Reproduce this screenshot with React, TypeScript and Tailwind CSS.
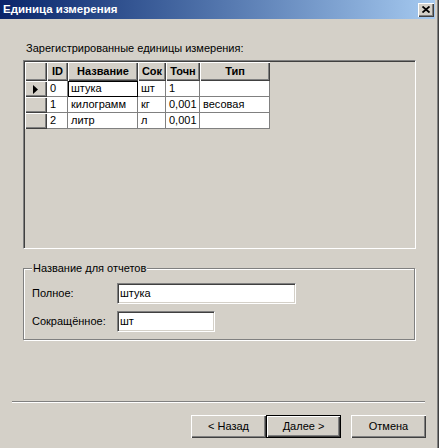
const units = [
  { id: '0', name: 'штука', short: 'шт', prec: '1', type: '' },
  { id: '1', name: 'килограмм', short: 'кг', prec: '0,001', type: 'весовая' },
  { id: '2', name: 'литр', short: 'л', prec: '0,001', type: '' },
];

const raised =
  'bg-[#d4d0c8] shadow-[inset_1px_1px_0_#fff,inset_-1px_-1px_0_#404040,inset_-2px_-2px_0_#808080]';
const sunken =
  'border border-t-[#808080] border-l-[#808080] border-r-white border-b-white p-[1px] shadow-[inset_1px_1px_0_#404040,inset_-1px_-1px_0_#d4d0c8]';

function HeaderCell({ w, children }: { w: string; children?: React.ReactNode }) {
  return (
    <div className={`${w} h-[19px] ${raised} flex items-center justify-center font-bold pb-[1px]`}>
      {children}
    </div>
  );
}

function Cell({ w, focus, children }: { w: string; focus?: boolean; children?: React.ReactNode }) {
  return (
    <div
      className={`${w} h-[16px] bg-white border-r border-b pl-[3px] flex items-center whitespace-nowrap overflow-hidden ${
        focus ? 'border-black shadow-[inset_1px_1px_0_#000]' : 'border-[#808080]'
      }`}
    >
      {children}
    </div>
  );
}

function Button({ label, primary }: { label: string; primary?: boolean }) {
  if (primary) {
    return (
      <div className="w-[75px] h-[23px] border border-black">
        <div className={`w-full h-full ${raised} flex items-center justify-center`}>{label}</div>
      </div>
    );
  }
  return <div className={`w-[75px] h-[23px] ${raised} flex items-center justify-center`}>{label}</div>;
}

export default function App() {
  return (
    <div className="w-[439px] h-[448px] bg-[#d4d0c8] flex font-['Liberation_Sans',Arial,sans-serif] text-[11px] leading-[13px] text-black">
      <div className="w-[435px] flex flex-col">
        {/* title bar */}
        <div className="h-[19px] bg-linear-to-r from-[#0a246a] to-[#a6caf0] flex items-center pl-[3px]">
          <span className="text-white font-bold text-[11.5px]">Единица измерения</span>
          <div className={`ml-auto mr-[1px] w-[16px] h-[14px] ${raised} flex items-center justify-center pb-[1px] pr-[1px]`}>
            <svg width="8" height="7" viewBox="0 0 8 7">
              <path d="M0.5 0.5 L7.5 6.5 M7.5 0.5 L0.5 6.5" stroke="#000" strokeWidth="1.8" />
            </svg>
          </div>
        </div>

        <div className="ml-[26px] mt-[23px]">Зарегистрированные единицы измерения:</div>

        {/* units grid */}
        <div className={`ml-[23px] mt-[5px] w-[393px] h-[189px] ${sunken}`}>
          <div className="flex">
            <HeaderCell w="w-[22px]" />
            <HeaderCell w="w-[21px]">ID</HeaderCell>
            <HeaderCell w="w-[70px]">Название</HeaderCell>
            <HeaderCell w="w-[28px]">Сок</HeaderCell>
            <HeaderCell w="w-[34px]">Точн</HeaderCell>
            <HeaderCell w="w-[70px]">Тип</HeaderCell>
          </div>
          {units.map((u, i) => (
            <div key={u.id} className="flex">
              <div className={`w-[22px] h-[16px] ${raised} flex items-center pl-[8px]`}>
                {i === 0 && (
                  <svg width="5" height="9" viewBox="0 0 5 9">
                    <path d="M0 0 L5 4.5 L0 9 Z" fill="#000" />
                  </svg>
                )}
              </div>
              <Cell w="w-[21px]">{u.id}</Cell>
              <Cell w="w-[70px]" focus={i === 0}>
                {u.name}
              </Cell>
              <Cell w="w-[28px]">{u.short}</Cell>
              <Cell w="w-[34px]">{u.prec}</Cell>
              <Cell w="w-[70px]">{u.type}</Cell>
            </div>
          ))}
        </div>

        {/* report names group */}
        <div className="relative ml-[23px] mt-[19px] w-[392px] h-[72px] border border-[#808080] shadow-[inset_1px_1px_0_#fff,1px_1px_0_#fff] pl-[8px] pt-[14px] flex flex-col gap-[7px]">
          <span className="absolute -top-[7px] left-[8px] px-[1px] bg-[#d4d0c8]">Название для отчетов</span>
          <div className="flex items-center">
            <span className="w-[85px]">Полное:</span>
            <div className={`w-[179px] h-[21px] bg-white ${sunken} flex items-center pl-[2px]`}>штука</div>
          </div>
          <div className="flex items-center">
            <span className="w-[85px]">Сокращённое:</span>
            <div className={`w-[98px] h-[21px] bg-white ${sunken} flex items-center pl-[2px]`}>шт</div>
          </div>
        </div>

        <div className="ml-[12px] mt-[61px] w-[413px] h-[2px] border-t border-t-[#808080] border-b border-b-white" />

        <div className="mt-[12px] flex pl-[191px]">
          <Button label="< Назад" />
          <Button label="Далее >" primary />
          <div className="ml-[10px]">
            <Button label="Отмена" />
          </div>
        </div>
      </div>
      <div className="w-[2px] bg-[#d4d0c8]" />
      <div className="w-[1px] bg-[#808080]" />
      <div className="w-[1px] bg-[#404040]" />
    </div>
  );
}
